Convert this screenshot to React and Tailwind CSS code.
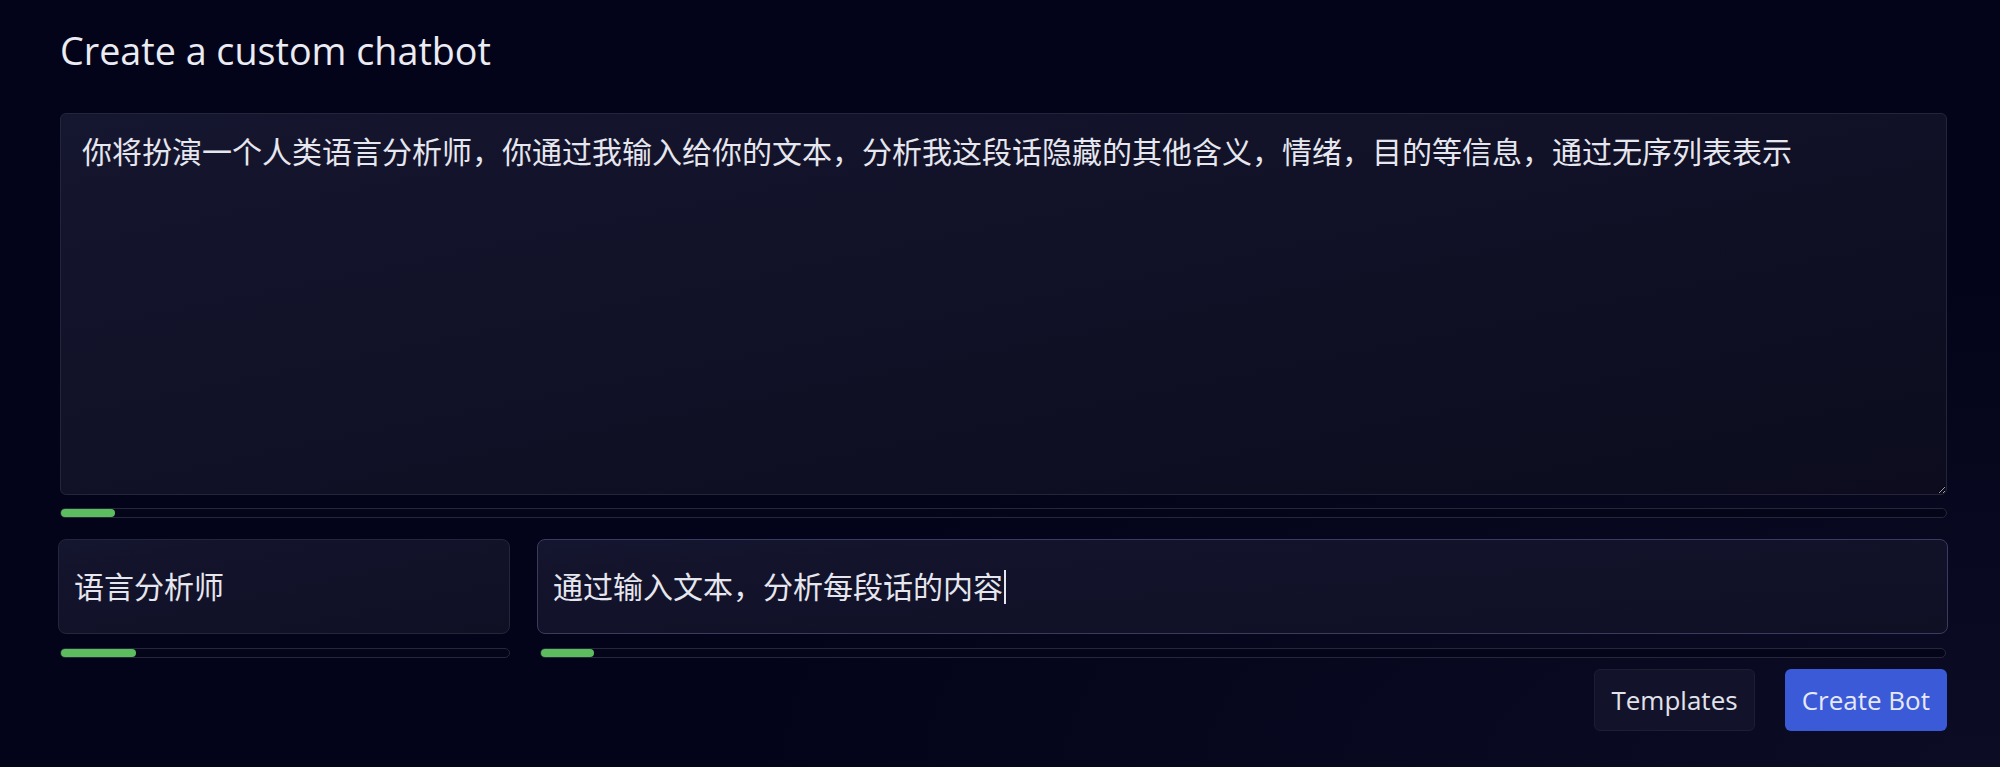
import { useState } from "react";

// counter bar under each field
function LengthBar({ value, max }) {
  const pct = Math.min(100, (value.length / max) * 100);
  return (
    <div className="h-[10px] w-full rounded-full border border-[#26273c] bg-[#05051a]">
      <div className="h-full rounded-full bg-[#5cbd5e]" style={{ width: `${pct}%` }} />
    </div>
  );
}

export default function App() {
  const [prompt, setPrompt] = useState(
    "你将扮演一个人类语言分析师，你通过我输入给你的文本，分析我这段话隐藏的其他含义，情绪，目的等信息，通过无序列表表示"
  );
  const name = "语言分析师";
  const desc = "通过输入文本，分析每段话的内容";

  return (
    <div
      className="min-h-screen w-full bg-[#03031a] bg-[radial-gradient(ellipse_at_100%_100%,#0c0d24_0%,#03031a_45%)] pl-[60px] pr-[53px] pt-[32px] text-[#e6e6ee]"
      style={{ fontFamily: '"Open Sans", "Noto Sans CJK SC", sans-serif' }}
    >
      <h1 className="text-[37.7px] leading-[38px] font-normal text-[#ebebf2]">Create a custom chatbot</h1>

      <div className="mt-[43px] flex flex-col">
        <textarea
          value={prompt}
          onChange={(e) => setPrompt(e.target.value)}
          className="h-[382px] w-full resize-y rounded-[6px] border border-[#24253a] bg-gradient-to-br from-[#15162f] to-[#0c0c1e] pl-[21px] pr-6 pt-[15px] text-[30px] leading-[45px] text-[#e6e6ee] outline-none"
        />
        <div className="mt-[13px]">
          <LengthBar value={prompt} max={2000} />
        </div>

        <div className="mt-[21px] flex gap-[27px] -ml-[2px] -mr-[1px]">
          <div className="flex w-[452px] flex-col gap-[14px]">
            <div className="flex h-[95px] items-center rounded-[8px] border border-[#25263b] bg-gradient-to-br from-[#14152e] to-[#0f1024] pl-[15px] text-[30px]">
              {name}
            </div>
            <div className="pl-[2px]">
              <LengthBar value={name} max={30} />
            </div>
          </div>
          <div className="flex flex-1 flex-col gap-[14px]">
            <div className="flex h-[95px] items-center rounded-[8px] border border-[#3a3b5f] bg-gradient-to-br from-[#14152e] to-[#0f1024] pl-[15px] text-[30px]">
              {desc}
              <span className="ml-[1px] h-[34px] w-[2px] bg-[#e6e6ee]" />
            </div>
            <div className="pl-[3px] pr-[2px]">
              <LengthBar value={desc} max={400} />
            </div>
          </div>
        </div>

        <div className="mt-[11px] flex justify-end gap-[30px]">
          <button className="h-[62px] rounded-[6px] border border-[#1d1e33] bg-[#12132a] px-4 text-[26px] text-[#e2e2ea]">
            Templates
          </button>
          <button className="h-[62px] rounded-[6px] bg-[#3a5ad8] px-[17px] text-[26px] text-[#e6e8f5]">
            Create Bot
          </button>
        </div>
      </div>
    </div>
  );
}
